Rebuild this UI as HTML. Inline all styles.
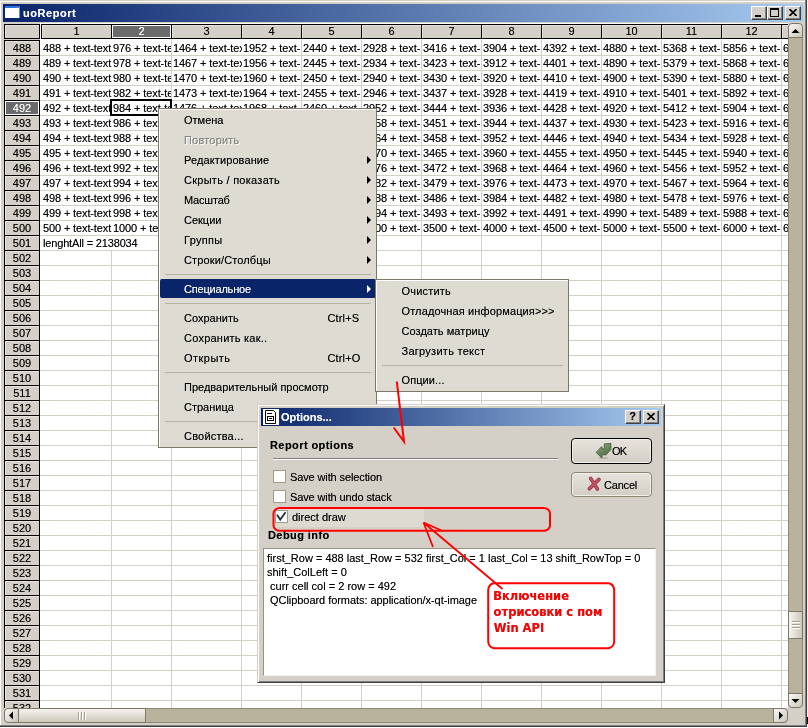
<!DOCTYPE html><html><head><meta charset="utf-8"><title>uoReport</title><style>
*{box-sizing:border-box;margin:0;padding:0}
html,body{width:808px;height:728px;overflow:hidden;background:#fff}
body{position:relative;font-family:"Liberation Sans",sans-serif;font-size:11px;color:#000;line-height:13px;text-shadow:0 0 0 rgba(0,0,0,.5)}
.a{position:absolute}
#win{left:0;top:0;width:808px;height:728px;background:#d4d0c8;overflow:hidden;will-change:transform}
.tb{background:linear-gradient(90deg,#0a246a 0%,#a6caf0 100%);color:#fff;font-weight:bold;white-space:nowrap;text-shadow:0 0 0 rgba(255,255,255,.5)}
.tbtn{background:#d4d0c8;border:1px solid;border-color:#fff #404040 #404040 #fff;box-shadow:inset -1px -1px 0 #808080}
#grid{left:40px;top:23px;width:748px;height:685px;background:#fff;overflow:hidden}
.hl{left:0;height:1px;width:748px;background:#d4d0c8}
.vl{top:0;width:1px;height:685px;background:#d4d0c8}
.hc{background:#d4d0c8;border:1px solid #000;box-shadow:inset 1px 1px 0 #e6e3dc;text-align:center;line-height:13px;height:16px;white-space:nowrap;overflow:hidden}
.rh{padding-top:1px}
.hc.sel{background:#6a6a6a;color:#fff;box-shadow:inset 0 0 0 1px #fff;text-shadow:0 0 0 rgba(255,255,255,.5)}
.c{height:15px;line-height:15px;white-space:nowrap;overflow:hidden;padding-left:1px;padding-top:1px;letter-spacing:-0.1px}
.menu{background:#dedbd3;border:1px solid #7d7768;box-shadow:inset 1px 1px 0 #fff}
.mi{left:1px;height:20px;line-height:20px;white-space:nowrap}
.mi span.t{position:absolute;left:25px;top:0}
.mi span.s{position:absolute;left:167.5px;top:0;letter-spacing:0.15px}
.mi.dis{color:#8a877f;text-shadow:1px 1px 0 #fff,0 0 0 #8a877f}
.mi.hi{background:#0a246a;color:#fff;height:19px;border-radius:2px;text-shadow:0 0 0 rgba(255,255,255,.5)}
.arr{position:absolute;width:0;height:0;border-style:solid;border-width:4px 0 4px 4px;border-color:transparent transparent transparent #000;top:6px}
.mi.hi .arr{border-left-color:#fff}
.sep{height:1px;background:#b5b1a4;}
.sb{background:#b9b29c}
.sbtn{background:linear-gradient(135deg,#f6f4ef 10%,#ccc8bc 95%);border:1px solid #7d7765;border-radius:3px}
</style></head><body>
<div id="win" class="a">
<div class="a" style="left:0;top:0;width:808px;height:1px;background:#d4d0c8"></div>
<div class="a" style="left:0;top:1px;width:806px;height:1px;background:#fff"></div>
<div class="a" style="left:0;top:1px;width:1px;height:725px;background:#fff"></div>
<div class="a" style="left:805px;top:0;width:1px;height:726px;background:#808080"></div>
<div class="a" style="left:806px;top:0;width:1px;height:727px;background:#404040"></div>
<div class="a" style="left:807px;top:0;width:1px;height:728px;background:#f0f0ee"></div>
<div class="a" style="left:0;top:725px;width:806px;height:1px;background:#808080"></div>
<div class="a" style="left:0;top:726px;width:807px;height:1px;background:#404040"></div>
<div class="a" style="left:0;top:727px;width:808px;height:1px;background:#fff"></div>
<div class="a" style="left:807px;top:717px;width:1px;height:7px;background:#000"></div>
<div class="a tb" style="left:3px;top:4px;width:800px;height:18px">
<div class="a" style="left:2px;top:2px;width:15px;height:12px;background:#fff;border-top:2px solid #2a72e8;border-right:1px solid #5a92ea;box-shadow:1px 1px 0 rgba(10,36,106,.6)"><div class="a" style="left:12px;top:-1px;width:1px;height:1px;background:#f07028"></div></div>
<div class="a" style="left:20px;top:2px;line-height:14px;font-size:11px;letter-spacing:0.55px">uoReport</div>
</div>
<div class="a tbtn" style="left:751px;top:6px;width:16px;height:14px"><div class="a" style="left:3px;top:8px;width:6px;height:2px;background:#000"></div></div>
<div class="a tbtn" style="left:767px;top:6px;width:16px;height:14px"><div class="a" style="left:2px;top:1px;width:9px;height:9px;border:1px solid #000;border-top-width:2px"></div></div>
<div class="a tbtn" style="left:785px;top:6px;width:16px;height:14px"><svg class="a" style="left:3px;top:2px" width="8" height="7" viewBox="0 0 8 7"><path d="M0.5 0 L7.5 7 M7.5 0 L0.5 7" stroke="#000" stroke-width="1.6" fill="none"/></svg></div>
<div id="grid" class="a">
<div class="a hl" style="top:32px"></div>
<div class="a hl" style="top:47px"></div>
<div class="a hl" style="top:62px"></div>
<div class="a hl" style="top:77px"></div>
<div class="a hl" style="top:92px"></div>
<div class="a hl" style="top:107px"></div>
<div class="a hl" style="top:122px"></div>
<div class="a hl" style="top:137px"></div>
<div class="a hl" style="top:152px"></div>
<div class="a hl" style="top:167px"></div>
<div class="a hl" style="top:182px"></div>
<div class="a hl" style="top:197px"></div>
<div class="a hl" style="top:212px"></div>
<div class="a hl" style="top:227px"></div>
<div class="a hl" style="top:242px"></div>
<div class="a hl" style="top:257px"></div>
<div class="a hl" style="top:272px"></div>
<div class="a hl" style="top:287px"></div>
<div class="a hl" style="top:302px"></div>
<div class="a hl" style="top:317px"></div>
<div class="a hl" style="top:332px"></div>
<div class="a hl" style="top:347px"></div>
<div class="a hl" style="top:362px"></div>
<div class="a hl" style="top:377px"></div>
<div class="a hl" style="top:392px"></div>
<div class="a hl" style="top:407px"></div>
<div class="a hl" style="top:422px"></div>
<div class="a hl" style="top:437px"></div>
<div class="a hl" style="top:452px"></div>
<div class="a hl" style="top:467px"></div>
<div class="a hl" style="top:482px"></div>
<div class="a hl" style="top:497px"></div>
<div class="a hl" style="top:512px"></div>
<div class="a hl" style="top:527px"></div>
<div class="a hl" style="top:542px"></div>
<div class="a hl" style="top:557px"></div>
<div class="a hl" style="top:572px"></div>
<div class="a hl" style="top:587px"></div>
<div class="a hl" style="top:602px"></div>
<div class="a hl" style="top:617px"></div>
<div class="a hl" style="top:632px"></div>
<div class="a hl" style="top:647px"></div>
<div class="a hl" style="top:662px"></div>
<div class="a hl" style="top:677px"></div>
<div class="a hl" style="top:692px"></div>
<div class="a hl" style="top:707px"></div>
<div class="a vl" style="left:71px;top:227px"></div>
<div class="a vl" style="left:131px;top:16px"></div>
<div class="a vl" style="left:201px;top:212px"></div>
<div class="a vl" style="left:261px;top:16px"></div>
<div class="a vl" style="left:321px;top:16px"></div>
<div class="a vl" style="left:381px;top:16px"></div>
<div class="a vl" style="left:441px;top:16px"></div>
<div class="a vl" style="left:501px;top:16px"></div>
<div class="a vl" style="left:561px;top:16px"></div>
<div class="a vl" style="left:621px;top:16px"></div>
<div class="a vl" style="left:681px;top:16px"></div>
<div class="a vl" style="left:741px;top:16px"></div>
<div class="a c" style="left:2px;top:17px;width:70px;letter-spacing:-0.13px">488 + text-text</div>
<div class="a c" style="left:72px;top:17px;width:59px">976 + text-text</div>
<div class="a c" style="left:132px;top:17px;width:70px">1464 + text-text</div>
<div class="a c" style="left:202px;top:17px;width:58px">1952 + text-text</div>
<div class="a c" style="left:262px;top:17px;width:58px">2440 + text-text</div>
<div class="a c" style="left:322px;top:17px;width:58px">2928 + text-text</div>
<div class="a c" style="left:382px;top:17px;width:58px">3416 + text-text</div>
<div class="a c" style="left:442px;top:17px;width:58px">3904 + text-text</div>
<div class="a c" style="left:502px;top:17px;width:58px">4392 + text-text</div>
<div class="a c" style="left:562px;top:17px;width:58px">4880 + text-text</div>
<div class="a c" style="left:622px;top:17px;width:58px">5368 + text-text</div>
<div class="a c" style="left:682px;top:17px;width:58px">5856 + text-text</div>
<div class="a c" style="left:742px;top:17px;width:68px">6344 + text-text</div>
<div class="a c" style="left:2px;top:32px;width:70px;letter-spacing:-0.13px">489 + text-text</div>
<div class="a c" style="left:72px;top:32px;width:59px">978 + text-text</div>
<div class="a c" style="left:132px;top:32px;width:70px">1467 + text-text</div>
<div class="a c" style="left:202px;top:32px;width:58px">1956 + text-text</div>
<div class="a c" style="left:262px;top:32px;width:58px">2445 + text-text</div>
<div class="a c" style="left:322px;top:32px;width:58px">2934 + text-text</div>
<div class="a c" style="left:382px;top:32px;width:58px">3423 + text-text</div>
<div class="a c" style="left:442px;top:32px;width:58px">3912 + text-text</div>
<div class="a c" style="left:502px;top:32px;width:58px">4401 + text-text</div>
<div class="a c" style="left:562px;top:32px;width:58px">4890 + text-text</div>
<div class="a c" style="left:622px;top:32px;width:58px">5379 + text-text</div>
<div class="a c" style="left:682px;top:32px;width:58px">5868 + text-text</div>
<div class="a c" style="left:742px;top:32px;width:68px">6357 + text-text</div>
<div class="a c" style="left:2px;top:47px;width:70px;letter-spacing:-0.13px">490 + text-text</div>
<div class="a c" style="left:72px;top:47px;width:59px">980 + text-text</div>
<div class="a c" style="left:132px;top:47px;width:70px">1470 + text-text</div>
<div class="a c" style="left:202px;top:47px;width:58px">1960 + text-text</div>
<div class="a c" style="left:262px;top:47px;width:58px">2450 + text-text</div>
<div class="a c" style="left:322px;top:47px;width:58px">2940 + text-text</div>
<div class="a c" style="left:382px;top:47px;width:58px">3430 + text-text</div>
<div class="a c" style="left:442px;top:47px;width:58px">3920 + text-text</div>
<div class="a c" style="left:502px;top:47px;width:58px">4410 + text-text</div>
<div class="a c" style="left:562px;top:47px;width:58px">4900 + text-text</div>
<div class="a c" style="left:622px;top:47px;width:58px">5390 + text-text</div>
<div class="a c" style="left:682px;top:47px;width:58px">5880 + text-text</div>
<div class="a c" style="left:742px;top:47px;width:68px">6370 + text-text</div>
<div class="a c" style="left:2px;top:62px;width:70px;letter-spacing:-0.13px">491 + text-text</div>
<div class="a c" style="left:72px;top:62px;width:59px">982 + text-text</div>
<div class="a c" style="left:132px;top:62px;width:70px">1473 + text-text</div>
<div class="a c" style="left:202px;top:62px;width:58px">1964 + text-text</div>
<div class="a c" style="left:262px;top:62px;width:58px">2455 + text-text</div>
<div class="a c" style="left:322px;top:62px;width:58px">2946 + text-text</div>
<div class="a c" style="left:382px;top:62px;width:58px">3437 + text-text</div>
<div class="a c" style="left:442px;top:62px;width:58px">3928 + text-text</div>
<div class="a c" style="left:502px;top:62px;width:58px">4419 + text-text</div>
<div class="a c" style="left:562px;top:62px;width:58px">4910 + text-text</div>
<div class="a c" style="left:622px;top:62px;width:58px">5401 + text-text</div>
<div class="a c" style="left:682px;top:62px;width:58px">5892 + text-text</div>
<div class="a c" style="left:742px;top:62px;width:68px">6383 + text-text</div>
<div class="a c" style="left:2px;top:77px;width:70px;letter-spacing:-0.13px">492 + text-text</div>
<div class="a c" style="left:72px;top:77px;width:59px">984 + text-text</div>
<div class="a c" style="left:132px;top:77px;width:70px">1476 + text-text</div>
<div class="a c" style="left:202px;top:77px;width:58px">1968 + text-text</div>
<div class="a c" style="left:262px;top:77px;width:58px">2460 + text-text</div>
<div class="a c" style="left:322px;top:77px;width:58px">2952 + text-text</div>
<div class="a c" style="left:382px;top:77px;width:58px">3444 + text-text</div>
<div class="a c" style="left:442px;top:77px;width:58px">3936 + text-text</div>
<div class="a c" style="left:502px;top:77px;width:58px">4428 + text-text</div>
<div class="a c" style="left:562px;top:77px;width:58px">4920 + text-text</div>
<div class="a c" style="left:622px;top:77px;width:58px">5412 + text-text</div>
<div class="a c" style="left:682px;top:77px;width:58px">5904 + text-text</div>
<div class="a c" style="left:742px;top:77px;width:68px">6396 + text-text</div>
<div class="a c" style="left:2px;top:92px;width:70px;letter-spacing:-0.13px">493 + text-text</div>
<div class="a c" style="left:72px;top:92px;width:59px">986 + text-text</div>
<div class="a c" style="left:132px;top:92px;width:70px">1479 + text-text</div>
<div class="a c" style="left:202px;top:92px;width:58px">1972 + text-text</div>
<div class="a c" style="left:262px;top:92px;width:58px">2465 + text-text</div>
<div class="a c" style="left:322px;top:92px;width:58px">2958 + text-text</div>
<div class="a c" style="left:382px;top:92px;width:58px">3451 + text-text</div>
<div class="a c" style="left:442px;top:92px;width:58px">3944 + text-text</div>
<div class="a c" style="left:502px;top:92px;width:58px">4437 + text-text</div>
<div class="a c" style="left:562px;top:92px;width:58px">4930 + text-text</div>
<div class="a c" style="left:622px;top:92px;width:58px">5423 + text-text</div>
<div class="a c" style="left:682px;top:92px;width:58px">5916 + text-text</div>
<div class="a c" style="left:742px;top:92px;width:68px">6409 + text-text</div>
<div class="a c" style="left:2px;top:107px;width:70px;letter-spacing:-0.13px">494 + text-text</div>
<div class="a c" style="left:72px;top:107px;width:59px">988 + text-text</div>
<div class="a c" style="left:132px;top:107px;width:70px">1482 + text-text</div>
<div class="a c" style="left:202px;top:107px;width:58px">1976 + text-text</div>
<div class="a c" style="left:262px;top:107px;width:58px">2470 + text-text</div>
<div class="a c" style="left:322px;top:107px;width:58px">2964 + text-text</div>
<div class="a c" style="left:382px;top:107px;width:58px">3458 + text-text</div>
<div class="a c" style="left:442px;top:107px;width:58px">3952 + text-text</div>
<div class="a c" style="left:502px;top:107px;width:58px">4446 + text-text</div>
<div class="a c" style="left:562px;top:107px;width:58px">4940 + text-text</div>
<div class="a c" style="left:622px;top:107px;width:58px">5434 + text-text</div>
<div class="a c" style="left:682px;top:107px;width:58px">5928 + text-text</div>
<div class="a c" style="left:742px;top:107px;width:68px">6422 + text-text</div>
<div class="a c" style="left:2px;top:122px;width:70px;letter-spacing:-0.13px">495 + text-text</div>
<div class="a c" style="left:72px;top:122px;width:59px">990 + text-text</div>
<div class="a c" style="left:132px;top:122px;width:70px">1485 + text-text</div>
<div class="a c" style="left:202px;top:122px;width:58px">1980 + text-text</div>
<div class="a c" style="left:262px;top:122px;width:58px">2475 + text-text</div>
<div class="a c" style="left:322px;top:122px;width:58px">2970 + text-text</div>
<div class="a c" style="left:382px;top:122px;width:58px">3465 + text-text</div>
<div class="a c" style="left:442px;top:122px;width:58px">3960 + text-text</div>
<div class="a c" style="left:502px;top:122px;width:58px">4455 + text-text</div>
<div class="a c" style="left:562px;top:122px;width:58px">4950 + text-text</div>
<div class="a c" style="left:622px;top:122px;width:58px">5445 + text-text</div>
<div class="a c" style="left:682px;top:122px;width:58px">5940 + text-text</div>
<div class="a c" style="left:742px;top:122px;width:68px">6435 + text-text</div>
<div class="a c" style="left:2px;top:137px;width:70px;letter-spacing:-0.13px">496 + text-text</div>
<div class="a c" style="left:72px;top:137px;width:59px">992 + text-text</div>
<div class="a c" style="left:132px;top:137px;width:70px">1488 + text-text</div>
<div class="a c" style="left:202px;top:137px;width:58px">1984 + text-text</div>
<div class="a c" style="left:262px;top:137px;width:58px">2480 + text-text</div>
<div class="a c" style="left:322px;top:137px;width:58px">2976 + text-text</div>
<div class="a c" style="left:382px;top:137px;width:58px">3472 + text-text</div>
<div class="a c" style="left:442px;top:137px;width:58px">3968 + text-text</div>
<div class="a c" style="left:502px;top:137px;width:58px">4464 + text-text</div>
<div class="a c" style="left:562px;top:137px;width:58px">4960 + text-text</div>
<div class="a c" style="left:622px;top:137px;width:58px">5456 + text-text</div>
<div class="a c" style="left:682px;top:137px;width:58px">5952 + text-text</div>
<div class="a c" style="left:742px;top:137px;width:68px">6448 + text-text</div>
<div class="a c" style="left:2px;top:152px;width:70px;letter-spacing:-0.13px">497 + text-text</div>
<div class="a c" style="left:72px;top:152px;width:59px">994 + text-text</div>
<div class="a c" style="left:132px;top:152px;width:70px">1491 + text-text</div>
<div class="a c" style="left:202px;top:152px;width:58px">1988 + text-text</div>
<div class="a c" style="left:262px;top:152px;width:58px">2485 + text-text</div>
<div class="a c" style="left:322px;top:152px;width:58px">2982 + text-text</div>
<div class="a c" style="left:382px;top:152px;width:58px">3479 + text-text</div>
<div class="a c" style="left:442px;top:152px;width:58px">3976 + text-text</div>
<div class="a c" style="left:502px;top:152px;width:58px">4473 + text-text</div>
<div class="a c" style="left:562px;top:152px;width:58px">4970 + text-text</div>
<div class="a c" style="left:622px;top:152px;width:58px">5467 + text-text</div>
<div class="a c" style="left:682px;top:152px;width:58px">5964 + text-text</div>
<div class="a c" style="left:742px;top:152px;width:68px">6461 + text-text</div>
<div class="a c" style="left:2px;top:167px;width:70px;letter-spacing:-0.13px">498 + text-text</div>
<div class="a c" style="left:72px;top:167px;width:59px">996 + text-text</div>
<div class="a c" style="left:132px;top:167px;width:70px">1494 + text-text</div>
<div class="a c" style="left:202px;top:167px;width:58px">1992 + text-text</div>
<div class="a c" style="left:262px;top:167px;width:58px">2490 + text-text</div>
<div class="a c" style="left:322px;top:167px;width:58px">2988 + text-text</div>
<div class="a c" style="left:382px;top:167px;width:58px">3486 + text-text</div>
<div class="a c" style="left:442px;top:167px;width:58px">3984 + text-text</div>
<div class="a c" style="left:502px;top:167px;width:58px">4482 + text-text</div>
<div class="a c" style="left:562px;top:167px;width:58px">4980 + text-text</div>
<div class="a c" style="left:622px;top:167px;width:58px">5478 + text-text</div>
<div class="a c" style="left:682px;top:167px;width:58px">5976 + text-text</div>
<div class="a c" style="left:742px;top:167px;width:68px">6474 + text-text</div>
<div class="a c" style="left:2px;top:182px;width:70px;letter-spacing:-0.13px">499 + text-text</div>
<div class="a c" style="left:72px;top:182px;width:59px">998 + text-text</div>
<div class="a c" style="left:132px;top:182px;width:70px">1497 + text-text</div>
<div class="a c" style="left:202px;top:182px;width:58px">1996 + text-text</div>
<div class="a c" style="left:262px;top:182px;width:58px">2495 + text-text</div>
<div class="a c" style="left:322px;top:182px;width:58px">2994 + text-text</div>
<div class="a c" style="left:382px;top:182px;width:58px">3493 + text-text</div>
<div class="a c" style="left:442px;top:182px;width:58px">3992 + text-text</div>
<div class="a c" style="left:502px;top:182px;width:58px">4491 + text-text</div>
<div class="a c" style="left:562px;top:182px;width:58px">4990 + text-text</div>
<div class="a c" style="left:622px;top:182px;width:58px">5489 + text-text</div>
<div class="a c" style="left:682px;top:182px;width:58px">5988 + text-text</div>
<div class="a c" style="left:742px;top:182px;width:68px">6487 + text-text</div>
<div class="a c" style="left:2px;top:197px;width:70px;letter-spacing:-0.13px">500 + text-text</div>
<div class="a c" style="left:72px;top:197px;width:59px">1000 + text-text</div>
<div class="a c" style="left:132px;top:197px;width:70px">1500 + text-text</div>
<div class="a c" style="left:202px;top:197px;width:58px">2000 + text-text</div>
<div class="a c" style="left:262px;top:197px;width:58px">2500 + text-text</div>
<div class="a c" style="left:322px;top:197px;width:58px">3000 + text-text</div>
<div class="a c" style="left:382px;top:197px;width:58px">3500 + text-text</div>
<div class="a c" style="left:442px;top:197px;width:58px">4000 + text-text</div>
<div class="a c" style="left:502px;top:197px;width:58px">4500 + text-text</div>
<div class="a c" style="left:562px;top:197px;width:58px">5000 + text-text</div>
<div class="a c" style="left:622px;top:197px;width:58px">5500 + text-text</div>
<div class="a c" style="left:682px;top:197px;width:58px">6000 + text-text</div>
<div class="a c" style="left:742px;top:197px;width:68px">6500 + text-text</div>
<div class="a c" style="left:2px;top:212px;width:200px;letter-spacing:-0.16px">lenghtAll = 2138034</div>
<div class="a" style="left:70px;top:76px;width:62px;height:17px;border:2px solid #000"></div>
</div>
<div class="a hc" style="left:4px;top:24px;width:36px;height:15px"></div>
<div class="a" style="left:41px;top:24px;width:747px;height:15px;overflow:hidden">
<div class="a hc" style="left:0px;top:0;width:71px;height:15px">1</div>
<div class="a hc sel" style="left:70px;top:0;width:61px;height:15px">2</div>
<div class="a hc" style="left:130px;top:0;width:71px;height:15px">3</div>
<div class="a hc" style="left:200px;top:0;width:61px;height:15px">4</div>
<div class="a hc" style="left:260px;top:0;width:61px;height:15px">5</div>
<div class="a hc" style="left:320px;top:0;width:61px;height:15px">6</div>
<div class="a hc" style="left:380px;top:0;width:61px;height:15px">7</div>
<div class="a hc" style="left:440px;top:0;width:61px;height:15px">8</div>
<div class="a hc" style="left:500px;top:0;width:61px;height:15px">9</div>
<div class="a hc" style="left:560px;top:0;width:61px;height:15px">10</div>
<div class="a hc" style="left:620px;top:0;width:61px;height:15px">11</div>
<div class="a hc" style="left:680px;top:0;width:61px;height:15px">12</div>
<div class="a hc" style="left:740px;top:0;width:71px;height:15px">13</div>
</div>
<div class="a hc rh" style="left:4px;top:40px;width:36px;height:16px">488</div>
<div class="a hc rh" style="left:4px;top:55px;width:36px;height:16px">489</div>
<div class="a hc rh" style="left:4px;top:70px;width:36px;height:16px">490</div>
<div class="a hc rh" style="left:4px;top:85px;width:36px;height:16px">491</div>
<div class="a hc rh sel" style="left:4px;top:100px;width:36px;height:16px">492</div>
<div class="a hc rh" style="left:4px;top:115px;width:36px;height:16px">493</div>
<div class="a hc rh" style="left:4px;top:130px;width:36px;height:16px">494</div>
<div class="a hc rh" style="left:4px;top:145px;width:36px;height:16px">495</div>
<div class="a hc rh" style="left:4px;top:160px;width:36px;height:16px">496</div>
<div class="a hc rh" style="left:4px;top:175px;width:36px;height:16px">497</div>
<div class="a hc rh" style="left:4px;top:190px;width:36px;height:16px">498</div>
<div class="a hc rh" style="left:4px;top:205px;width:36px;height:16px">499</div>
<div class="a hc rh" style="left:4px;top:220px;width:36px;height:16px">500</div>
<div class="a hc rh" style="left:4px;top:235px;width:36px;height:16px">501</div>
<div class="a hc rh" style="left:4px;top:250px;width:36px;height:16px">502</div>
<div class="a hc rh" style="left:4px;top:265px;width:36px;height:16px">503</div>
<div class="a hc rh" style="left:4px;top:280px;width:36px;height:16px">504</div>
<div class="a hc rh" style="left:4px;top:295px;width:36px;height:16px">505</div>
<div class="a hc rh" style="left:4px;top:310px;width:36px;height:16px">506</div>
<div class="a hc rh" style="left:4px;top:325px;width:36px;height:16px">507</div>
<div class="a hc rh" style="left:4px;top:340px;width:36px;height:16px">508</div>
<div class="a hc rh" style="left:4px;top:355px;width:36px;height:16px">509</div>
<div class="a hc rh" style="left:4px;top:370px;width:36px;height:16px">510</div>
<div class="a hc rh" style="left:4px;top:385px;width:36px;height:16px">511</div>
<div class="a hc rh" style="left:4px;top:400px;width:36px;height:16px">512</div>
<div class="a hc rh" style="left:4px;top:415px;width:36px;height:16px">513</div>
<div class="a hc rh" style="left:4px;top:430px;width:36px;height:16px">514</div>
<div class="a hc rh" style="left:4px;top:445px;width:36px;height:16px">515</div>
<div class="a hc rh" style="left:4px;top:460px;width:36px;height:16px">516</div>
<div class="a hc rh" style="left:4px;top:475px;width:36px;height:16px">517</div>
<div class="a hc rh" style="left:4px;top:490px;width:36px;height:16px">518</div>
<div class="a hc rh" style="left:4px;top:505px;width:36px;height:16px">519</div>
<div class="a hc rh" style="left:4px;top:520px;width:36px;height:16px">520</div>
<div class="a hc rh" style="left:4px;top:535px;width:36px;height:16px">521</div>
<div class="a hc rh" style="left:4px;top:550px;width:36px;height:16px">522</div>
<div class="a hc rh" style="left:4px;top:565px;width:36px;height:16px">523</div>
<div class="a hc rh" style="left:4px;top:580px;width:36px;height:16px">524</div>
<div class="a hc rh" style="left:4px;top:595px;width:36px;height:16px">525</div>
<div class="a hc rh" style="left:4px;top:610px;width:36px;height:16px">526</div>
<div class="a hc rh" style="left:4px;top:625px;width:36px;height:16px">527</div>
<div class="a hc rh" style="left:4px;top:640px;width:36px;height:16px">528</div>
<div class="a hc rh" style="left:4px;top:655px;width:36px;height:16px">529</div>
<div class="a hc rh" style="left:4px;top:670px;width:36px;height:16px">530</div>
<div class="a hc rh" style="left:4px;top:685px;width:36px;height:16px">531</div>
<div class="a hc rh" style="left:4px;top:700px;width:36px;height:8px;border-bottom:none">532</div>
<div class="a sb" style="left:788px;top:36px;width:15px;height:660px;border-left:1px solid #8e8874;border-right:1px solid #8e8874"></div>
<div class="a sbtn" style="left:788px;top:23px;width:15px;height:15px;border-radius:4px 4px 0 0"></div>
<div class="a sbtn" style="left:788px;top:693px;width:15px;height:15px;border-radius:0 0 4px 4px"></div>
<div class="a sbtn" style="left:788px;top:611px;width:15px;height:28px;border-radius:0;background:linear-gradient(90deg,#f6f4ef,#ccc8bc)"><div class="a" style="left:3px;top:9px;width:8px;height:8px;background:repeating-linear-gradient(180deg,#a8a290 0 1px,#fff 1px 2px,rgba(0,0,0,0) 2px 3px)"></div></div>
<div class="a sb" style="left:16px;top:708px;width:760px;height:15px;border-top:1px solid #8e8874;border-bottom:1px solid #8e8874"></div>
<div class="a sbtn" style="left:4px;top:708px;width:15px;height:15px;border-radius:4px 0 0 4px"></div>
<div class="a sbtn" style="left:773px;top:708px;width:15px;height:15px;border-radius:0 4px 4px 0"></div>
<div class="a sbtn" style="left:18px;top:708px;width:128px;height:15px;border-radius:0;background:linear-gradient(180deg,#f6f4ef,#ccc8bc)"><div class="a" style="left:59px;top:3px;width:8px;height:8px;background:repeating-linear-gradient(90deg,#a8a290 0 1px,#fff 1px 2px,rgba(0,0,0,0) 2px 3px)"></div></div>
<svg class="a" style="left:0;top:0" width="808" height="728" viewBox="0 0 808 728" fill="#000"><path d="M791.5 33 L799.5 33 L795.5 29 Z"/><path d="M791.5 699 L799.5 699 L795.5 703 Z"/><path d="M779 711.5 L779 719.5 L783 715.5 Z"/><path d="M13 711.5 L13 719.5 L9 715.5 Z"/></svg>
<div class="a menu" style="left:158px;top:108px;width:219px;height:340px"><div class="mi a" style="top:1px;width:216px"><span class="t" style="left:24px">Отмена</span></div><div class="mi a dis" style="top:21px;width:216px"><span class="t" style="left:24px;letter-spacing:0.2px">Повторить</span></div><div class="mi a" style="top:41px;width:216px"><span class="t" style="left:24px;letter-spacing:0.11px">Редактирование</span><span class="arr" style="left:207px"></span></div><div class="mi a" style="top:61px;width:216px"><span class="t" style="left:24px;letter-spacing:0.27px">Скрыть / показать</span><span class="arr" style="left:207px"></span></div><div class="mi a" style="top:81px;width:216px"><span class="t" style="left:24px;letter-spacing:-0.2px">Масштаб</span><span class="arr" style="left:207px"></span></div><div class="mi a" style="top:101px;width:216px"><span class="t" style="left:24px">Секции</span><span class="arr" style="left:207px"></span></div><div class="mi a" style="top:121px;width:216px"><span class="t" style="left:24px;letter-spacing:0.3px">Группы</span><span class="arr" style="left:207px"></span></div><div class="mi a" style="top:141px;width:216px"><span class="t" style="left:24px;letter-spacing:0.13px">Строки/Столбцы</span><span class="arr" style="left:207px"></span></div><div class="a sep" style="left:6px;top:165px;width:206px"></div><div class="mi a hi" style="top:170px;width:216px"><span class="t" style="left:24px;letter-spacing:-0.2px">Специальное</span><span class="arr" style="left:207px"></span></div><div class="a sep" style="left:6px;top:194px;width:206px"></div><div class="mi a" style="top:199px;width:216px"><span class="t" style="left:24px">Сохранить</span><span class="s">Ctrl+S</span></div><div class="mi a" style="top:219px;width:216px"><span class="t" style="left:24px;letter-spacing:0.23px">Сохранить как..</span></div><div class="mi a" style="top:239px;width:216px"><span class="t" style="left:24px;letter-spacing:0.48px">Открыть</span><span class="s">Ctrl+O</span></div><div class="a sep" style="left:6px;top:263px;width:206px"></div><div class="mi a" style="top:268px;width:216px"><span class="t" style="left:24px">Предварительный просмотр</span></div><div class="mi a" style="top:288px;width:216px"><span class="t" style="left:24px">Страница</span></div><div class="a sep" style="left:6px;top:312px;width:206px"></div><div class="mi a" style="top:317px;width:216px"><span class="t" style="left:24px;letter-spacing:0.2px">Свойства...</span></div></div>
<div class="a menu" style="left:375px;top:279px;width:194px;height:113px"><div class="mi a" style="top:1px;width:191px"><span class="t" style="left:24.5px;letter-spacing:0.2px">Очистить</span></div><div class="mi a" style="top:21px;width:191px"><span class="t" style="left:24.5px;letter-spacing:0.13px">Отладочная информация&gt;&gt;&gt;</span></div><div class="mi a" style="top:41px;width:191px"><span class="t" style="left:24.5px;letter-spacing:0.05px">Создать матрицу</span></div><div class="mi a" style="top:61px;width:191px"><span class="t" style="left:24.5px;letter-spacing:0.27px">Загрузить текст</span></div><div class="a sep" style="left:6px;top:85px;width:181px"></div><div class="mi a" style="top:90px;width:191px"><span class="t" style="left:24.5px;letter-spacing:0.1px">Опции...</span></div></div>
<div class="a" id="dlg" style="left:257px;top:404px;width:408px;height:279px;background:#d4d0c8;border:1px solid;border-color:#d4d0c8 #404040 #404040 #d4d0c8;box-shadow:inset 1px 1px 0 #fff,inset -1px -1px 0 #808080">
<div class="a tb" style="left:3px;top:3px;width:400px;height:18px">
<div class="a" style="left:2px;top:1px;width:16px;height:16px;background:#fff"><svg class="a" style="left:0;top:0" width="16" height="16" viewBox="0 0 16 16"><path d="M2.5 1.5 H10.5 L12.5 3.5 V14.5 H2.5 Z" fill="#fff" stroke="#000" stroke-width="1"/><path d="M4 4.5 H9" stroke="#000"/><rect x="4.5" y="7.5" width="6" height="4" fill="none" stroke="#000"/><path d="M6 9.5 H9" stroke="#000"/></svg></div>
<div class="a" style="left:20px;top:2px;line-height:14px">Options...</div>
</div>
<div class="a tbtn" style="left:367px;top:5px;width:16px;height:14px;font-weight:bold;font-size:11px;line-height:11px;text-align:center;padding-right:1px">?</div>
<div class="a tbtn" style="left:385px;top:5px;width:16px;height:14px"><svg class="a" style="left:3px;top:2px" width="8" height="7" viewBox="0 0 8 7"><path d="M0.5 0 L7.5 7 M7.5 0 L0.5 7" stroke="#000" stroke-width="1.6" fill="none"/></svg></div>
<div class="a" style="left:12px;top:34px;font-weight:bold;white-space:nowrap;letter-spacing:0.42px">Report options</div>
<div class="a" style="left:15px;top:53px;width:285px;height:2px;border-top:1px solid #808080;border-bottom:1px solid #fff"></div>
<div class="a" style="left:313px;top:33px;width:81px;height:26px;border:1px solid #000;border-radius:4px;background:linear-gradient(180deg,#e6e3dc,#d2cec5);box-shadow:inset 0 0 0 1px #f2f0ea"></div>
<svg class="a" style="left:332px;top:33px" width="30" height="26" viewBox="590 438 30 26"><defs><linearGradient id="gg" x1="0" y1="0" x2="0.6" y2="1"><stop offset="0" stop-color="#93ad82"/><stop offset="1" stop-color="#4c6a40"/></linearGradient></defs><ellipse cx="603.5" cy="458" rx="5" ry="1" fill="#a8a498" opacity=".7"/><path d="M604.3 443.9 L610.9 443.4 L610.9 449.6 L605.8 455 L602.2 454.6 L601.8 457.9 L596.2 452.4 L601.7 446.6 L602.5 449.1 L604.4 448.8 Z" fill="url(#gg)" stroke="#4a5e40" stroke-width="0.9" stroke-linejoin="round"/></svg>
<div class="a" style="left:354px;top:40px;white-space:nowrap;letter-spacing:-0.7px">OK</div>
<div class="a" style="left:313px;top:67px;width:81px;height:25px;border:1px solid #8c8674;border-radius:4px;background:linear-gradient(180deg,#e6e3dc,#d2cec5);box-shadow:inset 0 0 0 1px #f2f0ea"></div>
<svg class="a" style="left:326px;top:67px" width="22" height="24" viewBox="584 472 22 24"><g fill="none" stroke-linecap="round"><path d="M590.6 478.4 L597.4 489 M599 479.4 L589.4 488.8" stroke="#8c3444" stroke-width="3.6"/><path d="M590.6 478.4 L597.4 489 M599 479.4 L589.4 488.8" stroke="#c44e62" stroke-width="2.2"/></g></svg>
<div class="a" style="left:346px;top:74px;white-space:nowrap;letter-spacing:-0.2px">Cancel</div>
<div class="a" style="left:15px;top:102px;width:151px;height:20px;background:#dddad2"></div>
<div class="a" style="left:15px;top:65px;width:13px;height:13px;background:#fff;border:1px solid #a29c8a"></div>
<div class="a" style="left:15px;top:85px;width:13px;height:13px;background:#fff;border:1px solid #a29c8a"></div>
<div class="a" style="left:17px;top:105px;width:13px;height:13px;background:#fff;border:1px solid #a29c8a"><svg class="a" style="left:0;top:0" width="11" height="11" viewBox="0 0 11 11"><path d="M1 3.8 L4.2 8.6 L9.6 1.3" fill="none" stroke="#26303c" stroke-width="1.8"/></svg></div>
<div class="a" style="left:32px;top:66px;white-space:nowrap;letter-spacing:-0.12px">Save with selection</div>
<div class="a" style="left:32px;top:86px;white-space:nowrap;letter-spacing:-0.12px">Save with undo stack</div>
<div class="a" style="left:34px;top:106px;white-space:nowrap">direct draw</div>
<div class="a" style="left:10px;top:124px;font-weight:bold;white-space:nowrap;letter-spacing:0.42px">Debug info</div>
<div class="a" style="left:5px;top:143px;width:393px;height:128px;background:#fff;border:1px solid;border-color:#969282 #f4f3f0 #f4f3f0 #969282;padding:2px 0 0 3px;line-height:14px;white-space:pre">first_Row = 488 last_Row = 532 first_Col = 1 last_Col = 13 shift_RowTop = 0
shift_ColLeft = 0
 curr cell col = 2 row = 492
<span style="letter-spacing:-0.05px"> QClipboard formats: application/x-qt-image</span></div>
</div>
<svg class="a" style="left:0;top:0" width="808" height="728" viewBox="0 0 808 728" fill="none" stroke="#ff0000" stroke-width="1.6">
<path d="M396.8 381.5 L404 441.5 L393.7 427.5" stroke-width="2"/>
<rect x="273.5" y="508" width="276.5" height="22.8" rx="6.5" ry="5.5" stroke-width="2"/>
<rect x="488.2" y="583.2" width="126" height="65" rx="6" ry="7" stroke-width="2"/>
<path d="M502.5 589 L423.5 522.5 L441.5 530.5 M423.5 522.5 L433 547" stroke-width="1.8"/>
<g stroke="none" fill="#ff0000" font-family="DejaVu Sans, Liberation Sans, sans-serif" font-weight="bold" font-size="11.5"><text x="493.3" y="600">Включение</text><text x="493.6" y="616">отрисовки с пом</text><text x="493.8" y="632">Win API</text></g>
</svg>
</div></body></html>
